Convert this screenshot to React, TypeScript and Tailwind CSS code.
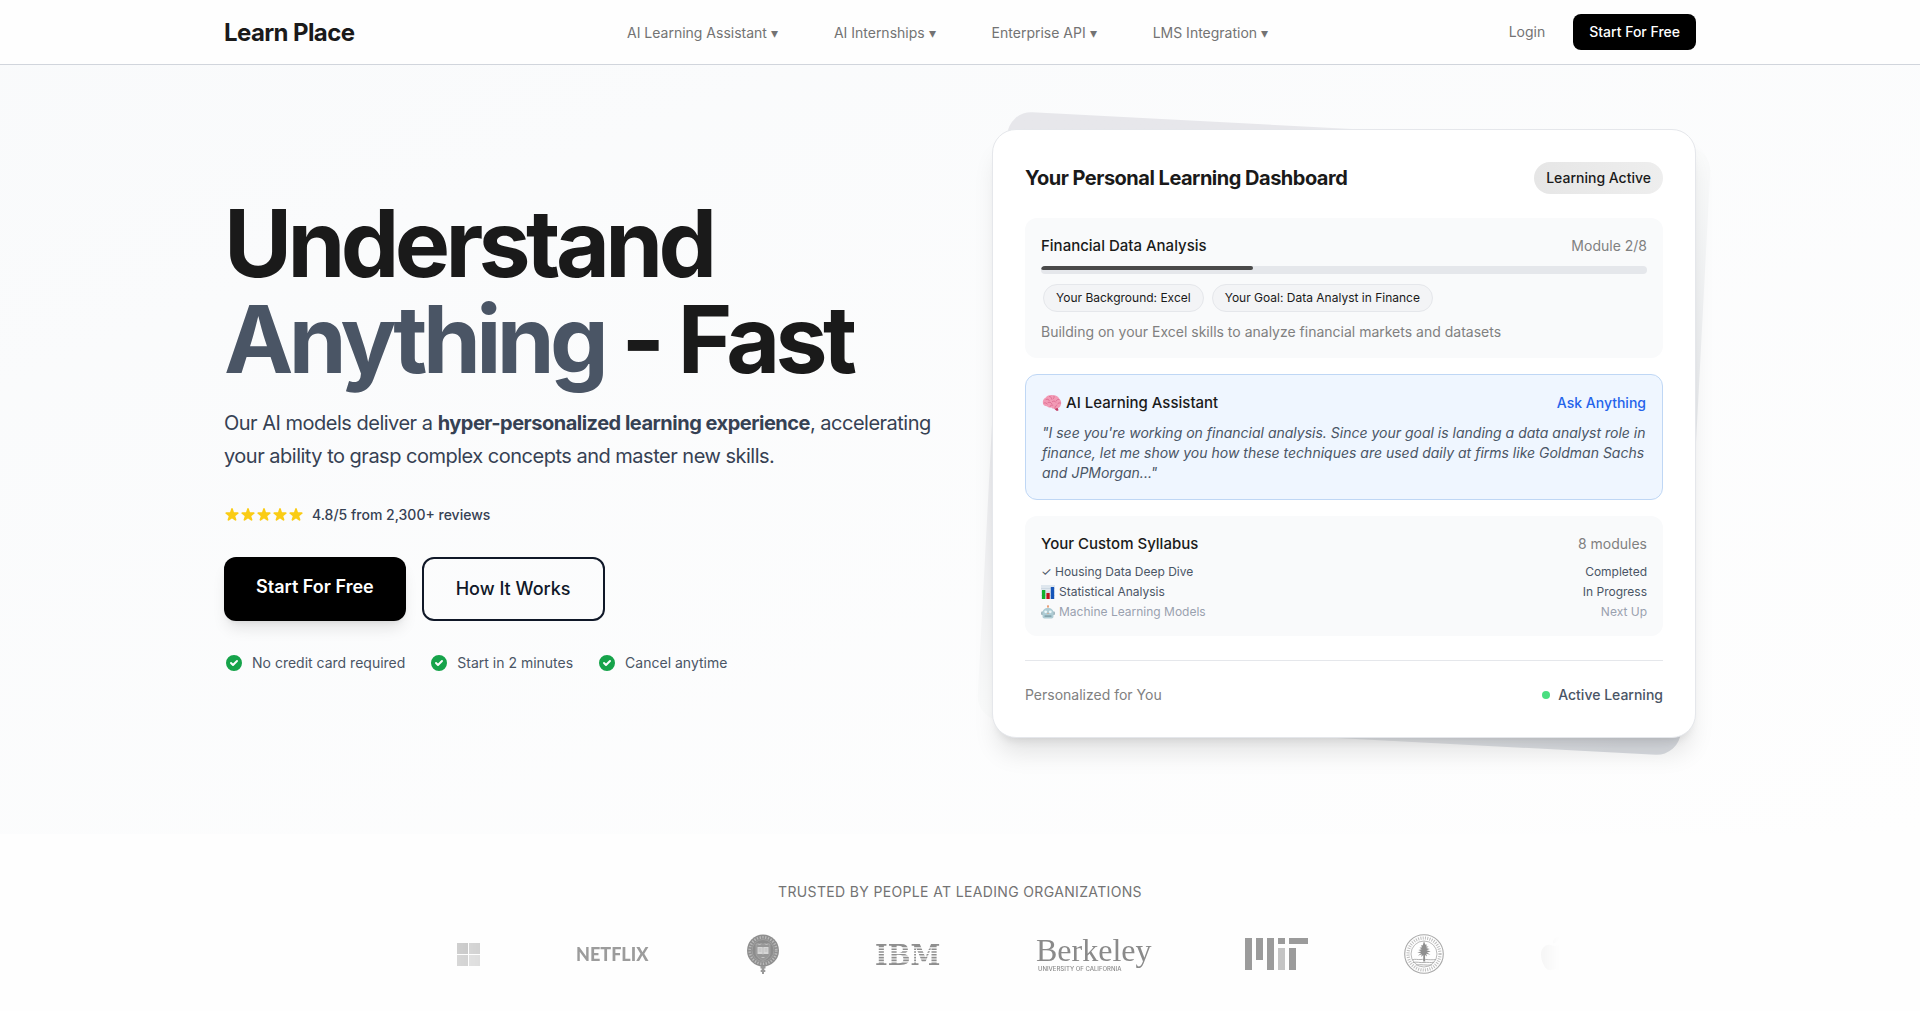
import React from "react";

const navLinks = ["AI Learning Assistant", "AI Internships", "Enterprise API", "LMS Integration"];

const perks = ["No credit card required", "Start in 2 minutes", "Cancel anytime"];

const goals = ["Your Background: Excel", "Your Goal: Data Analyst in Finance"];

function Star() {
    return (
        <svg className="h-4 w-4" viewBox="1 1 18 18" fill="#facc15" aria-hidden="true">
            <path d="M9.049 2.927c.3-.921 1.603-.921 1.902 0l1.07 3.292a1 1 0 00.95.69h3.462c.969 0 1.371 1.24.588 1.81l-2.8 2.034a1 1 0 00-.364 1.118l1.07 3.292c.3.921-.755 1.688-1.54 1.118l-2.8-2.034a1 1 0 00-1.175 0l-2.8 2.034c-.784.57-1.838-.197-1.539-1.118l1.07-3.292a1 1 0 00-.364-1.118L2.98 8.72c-.783-.57-.38-1.81.588-1.81h3.461a1 1 0 00.951-.69l1.07-3.292z" />
        </svg>
    );
}

function CheckCircle() {
    return (
        <svg className="h-5 w-5" viewBox="0 0 20 20" fill="#16a34a" aria-hidden="true">
            <path
                fillRule="evenodd"
                clipRule="evenodd"
                d="M10 18a8 8 0 100-16 8 8 0 000 16zm3.707-9.293a1 1 0 00-1.414-1.414L9 10.586 7.707 9.293a1 1 0 00-1.414 1.414l2 2a1 1 0 001.414 0l4-4z"
            />
        </svg>
    );
}

function BrainIcon() {
    return (
        <svg className="h-5 w-5" viewBox="0 0 20 20" aria-hidden="true">
            <path d="M11 14.5l4.5-.5 1 3.2c-.8.9-2 .8-2.6 0z" fill="#c23a63" />
            <path
                d="M1 10.5C.3 8 1.5 5.5 3.8 4.4 5.5 2.3 8.5 1.7 11 2.3c3-.2 5.5 1.3 6.5 3.7 1.8 1.5 2.2 4.2 1.2 6.2-.5 2-2.3 3.2-4.4 3-1.7 1-3.9.7-5-.6-2 .3-3.6-.2-4.3-1.3C3 13.4 1.3 12.3 1 10.5z"
                fill="#f29ab5"
            />
            <path
                d="M4 6.5c1.5-.8 2.8-.3 3.2 1M7.5 3.5c1.5.2 2.3 1.2 2 2.6M12 3c.4 1.3 0 2.3-1 3M17 6.5c-1.4-.3-2.4.3-2.7 1.4M2 10c1.3-.5 2.6 0 3.2 1M6 9.5c1.5-.7 3-.3 3.6 1M10.5 8.5c1.3-.8 2.6-.5 3.2.6M18.5 10c-1.2-.4-2.4 0-3 1M8 13.5c.3-1.2 1.5-1.8 2.8-1.4M13 14.5c0-1 .7-1.8 1.7-1.9"
                stroke="#d9668c"
                strokeWidth="0.8"
                fill="none"
                strokeLinecap="round"
            />
        </svg>
    );
}

function ChartIcon() {
    return (
        <svg className="h-3.5 w-3.5" viewBox="0 0 14 14" aria-hidden="true">
            <rect x="0" y="0" width="14" height="14" fill="#dfe7ee" />
            <path d="M0 3.5h14M0 7h14M0 10.5h14" stroke="#bccbd8" strokeWidth="0.5" />
            <rect x="1" y="5" width="3.3" height="9" fill="#12b02c" />
            <rect x="5.4" y="8" width="3.3" height="6" fill="#c1121f" />
            <rect x="9.8" y="2" width="3.3" height="12" fill="#1554b8" />
        </svg>
    );
}

function RobotIcon() {
    return (
        <svg className="h-3.5 w-3.5 opacity-70" viewBox="0 0 14 14" aria-hidden="true">
            <path d="M7 .5v3" stroke="#d97742" strokeWidth="1" />
            <circle cx="7" cy="1.2" r="1" fill="#e2763a" />
            <rect x="0" y="6.5" width="14" height="3.5" rx="1" fill="#7d9aa5" />
            <path d="M1.5 8c0-3 2-5 5.5-5s5.5 2 5.5 5v3.5c0 1.2-.8 2-2 2h-7c-1.2 0-2-.8-2-2z" fill="#8fb9c4" />
            <circle cx="4.7" cy="6.8" r="1.4" fill="#e6f7fa" />
            <circle cx="9.3" cy="6.8" r="1.4" fill="#e6f7fa" />
            <path d="M7 7.5l.8 1.5H6.2z" fill="#d97742" />
            <rect x="3.5" y="10.3" width="7" height="1.8" rx="0.5" fill="#55808d" />
        </svg>
    );
}

function Navbar() {
    return (
        <header className="border-b border-gray-300 bg-[#fefefe]">
            <div className="mx-auto flex h-16 max-w-screen-2xl items-center justify-between px-8">
                <a href="#" className="pt-0.5 pr-8 text-2xl font-bold tracking-tight text-[#1a1a1a]">
                    Learn Place
                </a>
                <nav className="flex items-center gap-14 pt-0.5">
                    {navLinks.map((label) => (
                        <a key={label} href="#" className="text-sm text-[#737373]">
                            {label} ▾
                        </a>
                    ))}
                </nav>
                <div className="flex items-center gap-7">
                    <a href="#" className="text-sm text-[#737373]">
                        Login
                    </a>
                    <a href="#" className="rounded-lg bg-black px-4 py-2 text-sm font-medium text-white">
                        Start For Free
                    </a>
                </div>
            </div>
        </header>
    );
}

function HeroCopy() {
    return (
        <div>
            <h1 className="text-[93px] leading-[96px] font-bold tracking-tighter text-[#1a1a1a]">
                Understand
                <br />
                <span className="text-gray-600">Anything</span> - Fast
            </h1>
            <p className="mt-5 -mr-4 text-xl leading-[33px] tracking-tight text-gray-700">
                Our AI models deliver a <strong className="font-bold">hyper-personalized learning experience</strong>,
                accelerating your ability to grasp complex concepts and master new skills.
            </p>
            <div className="mt-8 flex items-center gap-2">
                <div className="flex">
                    {[1, 2, 3, 4, 5].map((n) => (
                        <Star key={n} />
                    ))}
                </div>
                <span className="text-sm font-medium text-gray-700">4.8/5 from 2,300+ reviews</span>
            </div>
            <div className="mt-8 flex gap-4">
                <a href="#" className="rounded-xl bg-black px-8 py-4 text-lg font-semibold text-white shadow-lg">
                    Start For Free
                </a>
                <a href="#" className="rounded-xl border-2 border-gray-900 px-8 py-4 text-lg font-medium text-gray-900">
                    How It Works
                </a>
            </div>
            <ul className="mt-8 flex items-center gap-6 text-sm text-gray-600">
                {perks.map((perk) => (
                    <li key={perk} className="flex items-center gap-2">
                        <CheckCircle />
                        {perk}
                    </li>
                ))}
            </ul>
        </div>
    );
}

function DashboardCard() {
    return (
        <div className="relative">
            {/* tilted sheet behind the card */}
            <div className="absolute inset-0 rotate-3 rounded-3xl bg-gradient-to-br from-[#e7e7eb] from-20% via-[#fafbfb] via-50% to-[#d9dce1] to-95%" />
            <div className="relative rounded-3xl border border-gray-200 bg-white p-8 shadow-xl">
                <div className="mb-6 flex items-center justify-between">
                    <h2 className="text-xl font-bold tracking-tight text-[#1a1a1a]">Your Personal Learning Dashboard</h2>
                    <span className="rounded-full bg-gradient-to-r from-[#e6e6e6] to-[#eeeeee] px-3 py-1.5 text-sm font-medium text-[#1a1a1a]">
                        Learning Active
                    </span>
                </div>

                <div className="space-y-4">
                    <section className="rounded-xl bg-gray-50 p-4">
                        <div className="flex items-center justify-between">
                            <h3 className="text-[15px] leading-6 font-medium text-[#1a1a1a]">Financial Data Analysis</h3>
                            <span className="text-sm text-[#808080]">Module 2/8</span>
                        </div>
                        <div className="mt-2 h-2 overflow-hidden rounded-full bg-gray-200">
                            <div className="h-1 w-[35%] rounded-full bg-[#4a4a4a]" />
                        </div>
                        <div className="mt-2 flex gap-2 p-0.5">
                            {goals.map((goal) => (
                                <span
                                    key={goal}
                                    className="rounded-full border border-gray-200 bg-gray-100 px-3 py-[5px] text-xs leading-4 text-[#1a1a1a]"
                                >
                                    {goal}
                                </span>
                            ))}
                        </div>
                        <p className="mt-2 text-sm text-[#808080]">
                            Building on your Excel skills to analyze financial markets and datasets
                        </p>
                    </section>

                    <section className="rounded-xl border border-[#bfd7f5] bg-blue-50 p-4">
                        <div className="flex items-center justify-between">
                            <h3 className="flex items-center gap-1 text-[15px] leading-6 font-medium text-[#1a1a1a]">
                                <BrainIcon />
                                AI Learning Assistant
                            </h3>
                            <a href="#" className="text-sm font-medium text-[#2563eb]">
                                Ask Anything
                            </a>
                        </div>
                        <p className="mt-2 text-sm text-gray-600 italic">
                            "I see you're working on financial analysis. Since your goal is landing a data analyst role
                            in finance, let me show you how these techniques are used daily at firms like Goldman Sachs
                            and JPMorgan..."
                        </p>
                    </section>

                    <section className="rounded-xl bg-gray-50 p-4">
                        <div className="flex items-center justify-between">
                            <h3 className="text-[15px] leading-6 font-medium text-[#1a1a1a]">Your Custom Syllabus</h3>
                            <span className="text-sm text-[#808080]">8 modules</span>
                        </div>
                        <ul className="mt-2 space-y-1 text-xs text-gray-600">
                            <li className="flex justify-between">
                                <span>✓ Housing Data Deep Dive</span>
                                <span>Completed</span>
                            </li>
                            <li className="flex justify-between">
                                <span className="flex items-center gap-1">
                                    <ChartIcon />
                                    Statistical Analysis
                                </span>
                                <span>In Progress</span>
                            </li>
                            <li className="flex justify-between text-gray-400">
                                <span className="flex items-center gap-1">
                                    <RobotIcon />
                                    Machine Learning Models
                                </span>
                                <span>Next Up</span>
                            </li>
                        </ul>
                    </section>
                </div>

                <div className="mt-6 flex items-center justify-between border-t border-gray-200 pt-6 text-sm">
                    <span className="text-[#808080]">Personalized for You</span>
                    <span className="flex items-center gap-2 font-medium text-gray-600">
                        <span className="h-2 w-2 rounded-full bg-[#4ade80]" />
                        Active Learning
                    </span>
                </div>
            </div>
        </div>
    );
}

function MicrosoftLogo() {
    return (
        <svg className="w-[23px] shrink-0" viewBox="0 0 23 23" role="img" aria-label="Microsoft">
            <rect width="11" height="11" fill="#c4c4c4" />
            <rect x="12" width="11" height="11" fill="#d2d2d2" />
            <rect y="12" width="11" height="11" fill="#cecece" />
            <rect x="12" y="12" width="11" height="11" fill="#dedede" />
        </svg>
    );
}

function NetflixLogo() {
    return (
        <svg className="w-[75px] shrink-0 overflow-visible" viewBox="0 0 75 20" role="img" aria-label="Netflix">
            <text x="0" y="17" fontFamily="Lato,sans-serif" fontWeight="900" fontSize="18" fill="#9c9c9c">
                NETFLIX
            </text>
        </svg>
    );
}

function OxfordLogo() {
    return (
        <svg className="w-8 shrink-0" viewBox="0 0 32 40" role="img" aria-label="University of Oxford">
            <circle cx="16" cy="16.5" r="16" fill="#8f8f8f" />
            <circle cx="16" cy="16.5" r="13.3" fill="none" stroke="#b9b9b9" strokeWidth="2.6" strokeDasharray="1.3 1.5" />
            <circle cx="16" cy="16.5" r="11" fill="#8c8c8c" stroke="#acacac" strokeWidth="0.6" />
            <path d="M9 10h14v9c0 3.5-3 6-7 7.5-4-1.5-7-4-7-7.5z" fill="#979797" stroke="#b5b5b5" strokeWidth="0.5" />
            <path d="M10.5 13h5l.5.7.5-.7h5v7h-5l-.5.7-.5-.7h-5z" fill="#d6d6d6" />
            <path d="M16 13.5v6.5M11.5 15h3M17.5 15h3M11.5 17h3M17.5 17h3" stroke="#adadad" strokeWidth="0.6" />
            <path
                d="M11 9.5l1.5 1.5L14 9.5M18 9.5l1.5 1.5L21 9.5M14.5 23.5h3"
                stroke="#c5c5c5"
                strokeWidth="0.9"
                fill="none"
            />
            <path d="M13.5 32h5v2.5h-1.2V36h1V38h-1.3v2h-2v-2h-1.3v-2h1v-1.5h-1.2z" fill="#9a9a9a" />
        </svg>
    );
}

function IbmLogo() {
    return (
        <svg className="w-[65px] shrink-0 overflow-visible" viewBox="0 0 65 25" role="img" aria-label="IBM">
            <text x="0" y="23" fontFamily="'DejaVu Serif',serif" fontWeight="700" fontSize="27" fill="#8f8f8f">
                IBM
            </text>
            <path
                d="M0 5.8h66M0 8.6h66M0 11.4h66M0 14.2h66M0 17h66M0 19.8h66"
                stroke="#fefefe"
                strokeWidth="1.2"
            />
        </svg>
    );
}

function BerkeleyLogo() {
    return (
        <svg className="w-[113px] shrink-0 overflow-visible" viewBox="0 0 113 38" role="img" aria-label="Berkeley">
            <text x="0" y="26" fontFamily="'Liberation Serif',serif" fontSize="32" fill="#8a8a8a">
                Berkeley
            </text>
            <text x="2" y="36" fontFamily="Inter,sans-serif" fontWeight="500" fontSize="6" fill="#8a8a8a">
                UNIVERSITY OF CALIFORNIA
            </text>
        </svg>
    );
}

function MitLogo() {
    return (
        <svg className="w-[63px] shrink-0" viewBox="0 0 63 32" role="img" aria-label="MIT">
            <g fill="#9b9b9b">
                <rect width="7" height="32" />
                <rect x="11" width="7" height="22" />
                <rect x="22" width="7" height="32" />
                <rect x="33" width="7" height="6" />
                <rect x="44" width="19" height="6" />
                <rect x="44" y="10" width="7" height="22" />
            </g>
            <rect x="33" y="10" width="7" height="22" fill="#c4c4c4" />
        </svg>
    );
}

function StanfordLogo() {
    return (
        <svg className="w-10 shrink-0" viewBox="0 0 40 40" role="img" aria-label="Stanford University">
            <g fill="none" stroke="#a8a8a8">
                <circle cx="20" cy="20" r="19.3" strokeWidth="1.1" />
                <circle cx="20" cy="20" r="16" stroke="#bdbdbd" strokeWidth="3.2" strokeDasharray="1 1.3" />
                <circle cx="20" cy="20" r="13" strokeWidth="0.8" />
                <path
                    d="M8 26c3-1.5 6 0 9-.5 4-.6 7 .8 15 0M9 28.5c4-1 7 .5 11 0s7 .5 10-.3M12 31c5-.8 10 .5 16 0"
                    strokeWidth="0.9"
                />
            </g>
            <path
                d="M20 7l1.2 3.5 2 .2-1.4 1.5 2.8.6-2.5 1.2 3.6.9-3.2 1.3 4.2 1.2-3.8 1 3.6 2.4-4.3-1 .8 2.6-2-1.5.2 6.6h-2l.1-6.5-2.2 1.9.7-2.6-3.9 1.5 3.3-2.9-3.9-.2 3.9-1.5-2.9-1.2 3.4-.8-2.2-1.5 2.7-.5-1.4-1.8 2-.2z"
                fill="#8f8f8f"
            />
        </svg>
    );
}

function AppleLogo() {
    return (
        <svg className="w-8 shrink-0" viewBox="3 0 30 38" role="img" aria-label="Apple">
            <path
                d="M21 2c.3 3-2.5 7-6 7 0-3.5 2.5-6.5 6-7zM4 19c0-6 4-9 8-9 2 0 3.5 1.2 5 1.2s3-1.2 5.5-1.2c2 0 4 1 5.5 3-5 3-4 10 1 12-1.5 4.5-4.5 9-7 9-2 0-2.5-1-5-1s-3 1-5 1c-4 0-8-8-8-15z"
                fill="#cccccc"
            />
        </svg>
    );
}

function TrustedBy() {
    return (
        <section className="px-8 py-12">
            <p className="text-center text-sm tracking-wide text-[#737373] uppercase">
                Trusted by people at leading organizations
            </p>
            <div className="mx-auto mt-8 flex h-10 max-w-[1200px] items-center gap-24 overflow-hidden pl-[97px] [mask-image:linear-gradient(to_right,transparent,black_10%,black_90%,transparent)]">
                <MicrosoftLogo />
                <NetflixLogo />
                <OxfordLogo />
                <IbmLogo />
                <BerkeleyLogo />
                <MitLogo />
                <StanfordLogo />
                <AppleLogo />
            </div>
        </section>
    );
}

export default function App() {
    return (
        <div className="min-h-screen bg-[#fefefe] font-['Inter',sans-serif]">
            <Navbar />
            <main>
                <section className="bg-gradient-to-br from-gray-50 to-[#fefefe]">
                    <div className="mx-auto grid max-w-screen-2xl grid-cols-2 items-center gap-16 px-8 pt-16 pb-24">
                        <HeroCopy />
                        <DashboardCard />
                    </div>
                </section>
                <TrustedBy />
            </main>
        </div>
    );
}
